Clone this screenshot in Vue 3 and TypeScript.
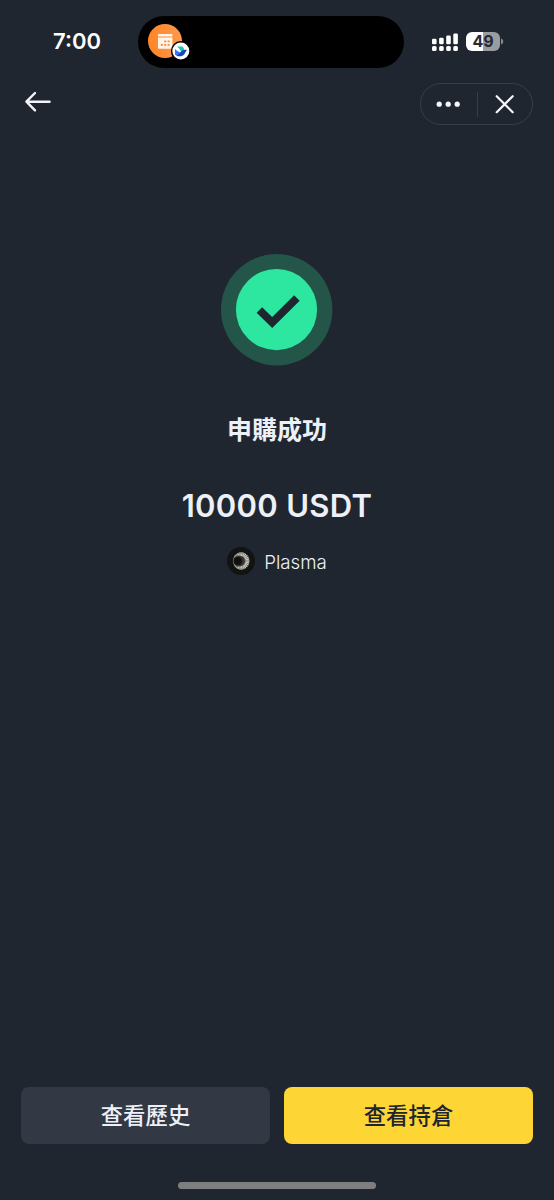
<script setup lang="ts">
interface Action {
  label: string
  kind: 'secondary' | 'primary'
}

const time = '7:00'
const battery = 49
const title = '申購成功'
const amount = '10000 USDT'
const token = 'Plasma'
const actions: Action[] = [
  { label: '查看歷史', kind: 'secondary' },
  { label: '查看持倉', kind: 'primary' },
]
const signalBars: number[] = [5.5, 6.5, 8.7, 10.7]
const ridges: number[] = Array.from({ length: 17 }, (_, i) => -112 + i * 14)
</script>

<template>
  <main class="screen">
    <header class="status">
      <span class="time">{{ time }}</span>
      <div class="island">
        <svg class="live" width="46" height="44" viewBox="0 0 46 44">
          <defs>
            <linearGradient id="orange" x1="0" y1="0" x2="1" y2="0">
              <stop offset="0" stop-color="#ff8427" />
              <stop offset="1" stop-color="#ff9a4a" />
            </linearGradient>
          </defs>
          <circle cx="19" cy="21" r="17" fill="url(#orange)" />
          <rect x="12" y="14" width="14.4" height="2.4" rx=".4" fill="#fff5ea" />
          <path d="M12 17.4h14.4v10.4a1 1 0 0 1-1 1H13a1 1 0 0 1-1-1z" fill="#fff5ea" />
          <path d="M18.2 20.4h2v1.8h-2zM21.6 20.4h2v1.8h-2zM14.9 24h2v1.8h-2zM18.2 24h2v1.8h-2zM21.6 24h2v1.8h-2z" fill="#fb8738" />
          <circle cx="34.8" cy="31" r="9.9" fill="#000" />
          <circle cx="34.8" cy="31" r="8.5" fill="#fff" />
          <path d="M31.2 26.5h5.1c1.2 1 1.9 2.3 2.2 3.8l-3 2.2c-1-2.4-2.4-4.4-4.3-6z" fill="#12cdb0" />
          <path d="M29 28.9c2.2 2.2 4.7 3.6 7.6 4.2l-2.5 2.7c-2.1.4-3.8-.2-5.1-1.4z" fill="#3676ff" />
          <path d="M34.3 32.5c1.8-2.3 3.7-3.2 6.6-2.5-1.5 1.5-1.5 3.2-3 4.7-2.2 2-5.4 2.1-7.6.8 1.5-.3 2.9-1.5 4-3z" fill="#1747ba" />
        </svg>
      </div>
      <div class="indicators">
        <svg width="27" height="20" viewBox="0 0 27 20" fill="#fff">
          <template v-for="(h, i) in signalBars" :key="i">
            <rect :x="i * 7.1" :y="12.2 - h" width="4.6" :height="h" rx="1.3" />
            <rect :x="i * 7.1" y="14" width="4.6" height="5" rx="1.5" />
          </template>
        </svg>
        <div class="battery"><span class="level">{{ battery }}</span></div>
        <svg class="tip" width="3" height="7" viewBox="0 0 3 7"><path d="M0 .5c3 1 3 5 0 6z" fill="#85898f" /></svg>
      </div>
    </header>

    <nav class="nav">
      <svg width="28" height="22" viewBox="0 0 28 22" fill="none" stroke="#f3f4f8" stroke-width="2.4" stroke-linecap="round" stroke-linejoin="round">
        <path d="M25.6 10.7H2.6M11 2 2.4 10.7 11 19.4" />
      </svg>
      <div class="capsule">
        <svg width="56" height="40" viewBox="0 0 56 40" fill="#f5f6fa">
          <circle cx="18.2" cy="20.2" r="2.6" /><circle cx="27.2" cy="20.2" r="2.6" /><circle cx="36.2" cy="20.2" r="2.6" />
        </svg>
        <span class="divider"></span>
        <svg width="54" height="40" viewBox="0 0 54 40" fill="none" stroke="#f6f7f9" stroke-width="2.2" stroke-linecap="round">
          <path d="m18.7 12.2 16 16m0-16-16 16" />
        </svg>
      </div>
    </nav>

    <section class="result">
      <svg class="success" width="112" height="112" viewBox="0 0 112 112">
        <circle cx="55.7" cy="55.7" r="55.7" fill="#245549" />
        <circle cx="55.5" cy="55.6" r="40.6" fill="#2de6a0" />
        <path d="m38.4 56 12.8 12.6L75.9 44" fill="none" stroke="#202630" stroke-width="7.8" />
      </svg>
      <h1 class="title">{{ title }}</h1>
      <p class="amount">{{ amount }}</p>
      <div class="token">
        <svg width="28" height="28" viewBox="0 0 28 28">
          <circle cx="14" cy="14" r="14" fill="#121312" />
          <circle cx="14" cy="14" r="8.2" fill="#74746f" />
          <g stroke="#cfcec6" stroke-width="1">
            <path v-for="angle in ridges" :key="angle" d="M18.8 14h3.8" :transform="`rotate(${angle} 14 14)`" />
          </g>
          <path d="M7.4 10a7.8 7.8 0 0 1 10.6-3M7.4 18a7.8 7.8 0 0 0 10.6 3" fill="none" stroke="#96968f" stroke-width="1.4" />
          <circle cx="12.2" cy="14" r="5.6" fill="#343532" />
          <circle cx="10.8" cy="14" r="4.1" fill="#10110f" />
        </svg>
        <span class="token-name">{{ token }}</span>
      </div>
    </section>

    <footer class="actions">
      <button v-for="action in actions" :key="action.label" class="button" :class="action.kind" type="button">{{ action.label }}</button>
    </footer>
    <div class="home"></div>
  </main>
</template>

<style>
body {
  margin: 0;
  background: #202630;
}
</style>

<style scoped>
.screen {
  box-sizing: border-box;
  width: 554px;
  height: 1200px;
  display: flex;
  flex-direction: column;
  background: #202630;
  color: #edf0f7;
  font-family: Inter, "Noto Sans CJK TC", sans-serif;
  overflow: hidden;
}
.status {
  height: 83px;
  box-sizing: border-box;
  padding: 16px 50px 0 53px;
  display: flex;
  align-items: flex-start;
}
.time {
  width: 85px;
  font: 600 22px/51px Inter, sans-serif;
  color: #fff;
}
.island {
  width: 265.5px;
  height: 52px;
  border-radius: 26px;
  background: #000;
}
.live {
  display: block;
  margin: 4px 0 0 8px;
}
.indicators {
  height: 51px;
  margin-left: 28.5px;
  display: flex;
  align-items: center;
}
.battery {
  width: 34px;
  height: 19px;
  margin-left: 7px;
  border-radius: 6px;
  background: linear-gradient(90deg, #fff 0 50%, #999da2 50%);
  text-align: center;
}
.level {
  display: block;
  font: 700 16px/19px Inter, sans-serif;
  color: #252b34;
}
.tip {
  margin-left: 1px;
}
.nav {
  height: 42px;
  padding: 0 21px 0 24px;
  display: flex;
  justify-content: space-between;
  align-items: center;
}
.nav > svg {
  margin-top: -5px;
}
.capsule {
  box-sizing: border-box;
  width: 113px;
  height: 42px;
  border: 1.5px solid #373e49;
  border-radius: 21px;
  display: flex;
  align-items: center;
}
.divider {
  width: 1px;
  height: 25px;
  background: #373e49;
}
.result {
  margin-top: 129px;
  display: flex;
  flex-direction: column;
  align-items: center;
}
.success {
  display: block;
}
.title {
  margin: 43px 0 0;
  font: 700 25px/38px "Noto Sans CJK TC", sans-serif;
}
.amount {
  margin: 39px 0 0;
  font-size: 31px;
  font-weight: 600;
  line-height: 40px;
  letter-spacing: 0.3px;
}
.token {
  margin-top: 20.5px;
  display: flex;
  align-items: center;
  gap: 9px;
}
.token-name {
  padding-top: 3px;
  font-size: 18.7px;
  font-weight: 300;
  line-height: 25px;
}
.actions {
  margin-top: auto;
  padding: 0 21px;
  display: grid;
  grid-template-columns: 1fr 1fr;
  gap: 14px;
}
.button {
  height: 57px;
  padding: 0 0 4px;
  border: 0;
  border-radius: 8px;
  font: 500 22.4px/32px "Noto Sans CJK TC", sans-serif;
}
.secondary {
  background: #323844;
  color: #edf0f7;
}
.primary {
  background: #fdd535;
  color: #202630;
}
.home {
  width: 198px;
  height: 7px;
  margin: 38px 0 11px 178px;
  border-radius: 4px;
  background: #7e7e80;
}
</style>
